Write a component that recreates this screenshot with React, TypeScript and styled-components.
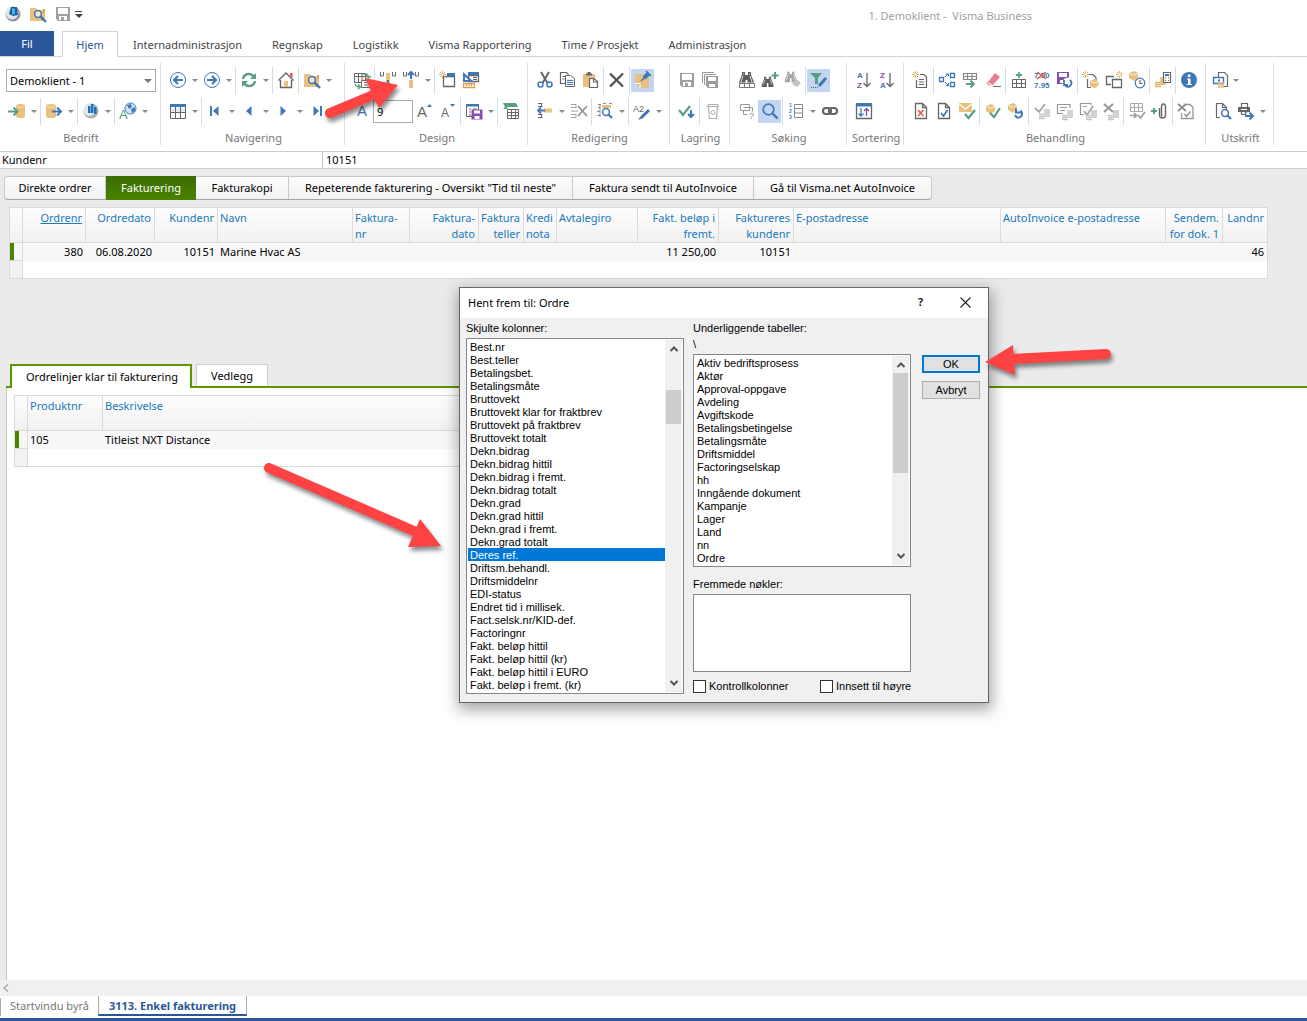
import React from "react";
import styled, { createGlobalStyle, css } from "styled-components";

const uiFont = '"Noto Sans", "Open Sans", sans-serif';
const dialogFont = '"Liberation Sans", Arial, sans-serif';

const GlobalStyle = createGlobalStyle`
  *, *::before, *::after { box-sizing: border-box; }
  body { margin: 0; background: #fff; }
  button, input, select { font: inherit; color: inherit; }
`;

/* ---------- drawing helpers ---------- */

const G = "#666666";
const L = "#b0b0b0";
const B = "#3f78b5";
const N = "#5a9f83";
const Y = "#e9c07f";
const P = "#8350ae";
const R = "#de5a43";

type ShapeProps = { d: string; c?: string; w?: number };
const S = ({ d, c = G, w = 1 }: ShapeProps) => <path d={d} fill="none" stroke={c} strokeWidth={w} />;
const F = ({ d, c = G }: ShapeProps) => <path d={d} fill={c} />;
const T = ({ x, y, c = G, s = 8, b = false, children }: { x: number; y: number; c?: string; s?: number; b?: boolean; children: React.ReactNode }) => (
  <text x={x} y={y} fill={c} fontSize={s} fontWeight={b ? 700 : 400} fontFamily="Liberation Sans, Arial, sans-serif">{children}</text>
);

const Magnifier = ({ x = 0, y = 0, c = B }: { x?: number; y?: number; c?: string }) => (
  <g transform={`translate(${x} ${y})`}>
    <circle cx="4" cy="4" r="3.4" fill="#fff" fillOpacity="0.6" stroke={c} strokeWidth="1.5" />
    <S d="M6.5 6.5l3.5 3.5" c={c} w={2.2} />
  </g>
);
const Sun = ({ x = 0, y = 0 }: { x?: number; y?: number }) => (
  <g transform={`translate(${x} ${y})`}>
    <S d="M3.5 0v7M0 3.5h7M1 1l5 5M6 1l-5 5" c="#e3ae5b" />
    <circle cx="3.5" cy="3.5" r="1.2" fill="#fff" />
  </g>
);
const Cube = ({ x = 0, y = 0 }: { x?: number; y?: number }) => (
  <g transform={`translate(${x} ${y})`}>
    <F d="M5 0l4 2v5l-4 3-5-3V2z" c={Y} />
    <S d="M0.5 2.3l4 2 4.5-2" c="#fff4dd" />
  </g>
);
const Coins = ({ x = 0, y = 0, c = "#c4c4c4" }: { x?: number; y?: number; c?: string }) => (
  <g transform={`translate(${x} ${y})`}>
    <S d="M5 1h6M5 3h6M5 5h6M5 7h6M0 5.5h5M0 7.5h5M0 9.5h6" c={c} w={1.3} />
  </g>
);
const Binoculars = ({ c = "#5c5c5c" }: { c?: string }) => (
  <>
    <F d="M4 1h3v3h3V1h3v3l3 7v3H9.500V9h-2v5H1v-3l3-7z" c={c} />
    <S d="M5 5l-2 6M12 5l2 6M5 3h1M11 3h1" c="#fff" w={0.8} />
  </>
);
const Doc = ({ c = G }: { c?: string }) => <S d="M3.500 1.500h7l4 4v11h-11zM10.500 1.500v4h4" c={c} w={1.300} />;
const Disk = ({ c }: { c: string }) => (
  <>
    <F d="M2 2h14v14H4l-2-2z" c={c} />
    <F d="M4 3h10v6H4zM5 11h8v4H5z" c="#fff" />
    <F d="M7 12h3v3H7z" c={c} />
  </>
);

const icons: Record<string, React.ReactNode> = {
  orb: (
    <>
      <circle cx="9" cy="9" r="7.500" fill="#8d969d" />
      <circle cx="8" cy="8" r="6.500" fill="#dfe5ea" />
      <F d="M7 2l6 0 1 8-5 1-4-2z" c="#1b5f96" />
      <F d="M8 3l3 1v5l-3 1z" c="#49b1e6" />
    </>
  ),
  folderSearch: (
    <>
      <F d="M1 3h6l1.500 2H16v11H1z" c={Y} />
      <F d="M14 4h2v4h-2z" c="#d9a653" />
      <Magnifier x={5} y={5} />
      <S d="M12 12l5 5" c={B} w={2.400} />
    </>
  ),
  save: <Disk c="#a0a0a0" />,
  dbIn: (
    <>
      <F d="M8 4q0-2 4.500-2T17 4v10q0 2-4.500 2T8 14z" c={Y} />
      <S d="M9 4.500q3.500 2 7 0" c="#f6dfb8" />
      <S d="M0 9.500h9M5.500 5.500l4 4-4 4" c={N} w={2} />
    </>
  ),
  dbOut: (
    <>
      <F d="M1 4q0-2 5-2t5 2v10q0 2-5 2t-5-2z" c={Y} />
      <S d="M2 4.500q4 2 8 0" c="#f6dfb8" />
      <S d="M7 9.500h9M12 5.500l4 4-4 4" c={B} w={2} />
    </>
  ),
  orbBars: (
    <>
      <circle cx="9" cy="9" r="7.500" fill="#a9b0b6" />
      <circle cx="7.500" cy="8" r="6" fill="#e3e8ec" />
      <F d="M6 4h2.500v7H6zM9 2h2.500v9H9zM12 5h2.500v7H12z" c="#1c74b4" />
    </>
  ),
  language: (
    <>
      <circle cx="11.500" cy="6.500" r="5.500" fill="#d7e5f2" stroke={B} />
      <F d="M8 3l4-1 1 3-3 2zM12 7l4-2v4l-3 2z" c={B} />
      <T x={0} y={17} c={N} s={13}>A</T>
    </>
  ),
  back: (
    <>
      <circle cx="9" cy="9" r="7.500" fill="#fff" stroke={B} />
      <S d="M14 9H5M9 5L5 9l4 4" c={B} w={2.200} />
    </>
  ),
  forward: (
    <>
      <circle cx="9" cy="9" r="7.500" fill="#fff" stroke={B} />
      <S d="M4 9h9M9 5l4 4-4 4" c={B} w={2.200} />
    </>
  ),
  refresh: (
    <>
      <S d="M3 8q1-5 6-5 3 0 5 3M15 10q-1 5-6 5-3 0-5-3" c={N} w={2.400} />
      <F d="M16 2v6h-6zM2 16v-6h6z" c={N} />
    </>
  ),
  home: (
    <>
      <F d="M13 2h2.500v5L13 5z" c={R} />
      <S d="M1.500 9.500L9 2l7.500 7.500M3.500 9v7.500h11V9" w={1.400} />
      <F d="M7 10h4v6H7z" c={Y} />
    </>
  ),
  table: (
    <>
      <F d="M1 2h16v3H1z" c={B} />
      <F d="M2 6h14v5H2z" c="#e0ebf6" />
      <S d="M1.500 5v11.500h15V5M1 10.500h16M6.500 5v11M11.500 5v11" w={1} />
    </>
  ),
  first: <><S d="M5 4v10" c={B} w={2} /><F d="M12.500 4v10L7 9z" c={B} /></>,
  prev: <F d="M11.500 4v10L6 9z" c={B} />,
  next: <F d="M6.500 4v10L12 9z" c={B} />,
  last: <><S d="M13 4v10" c={B} w={2} /><F d="M5.500 4v10L11 9z" c={B} /></>,
  tableSwap: (
    <>
      <S d="M1.500 2.500h11v9h-11zM1 5.500h11M5.500 2v9M9 2v9" />
      <F d="M8 9h9v8H8z" c="#fff" />
      <S d="M8.500 9.500h8v7h-8zM11 11.500h4M11 14h4" />
      <S d="M10 3h3q2 0 2.500 3M13 4.500l2.500 2.500L18 5M2 13q1 3 5 3M5 13.500l2.500 2.500L5 18" c={N} w={1.400} />
    </>
  ),
  colRemove: (
    <>
      <S d="M1.500 1v4h3V1M13.500 1v4h3V1" />
      <F d="M7 2h4v14H7z" c={Y} />
      <S d="M9 9v7" c={B} w={2} />
    </>
  ),
  colInsert: (
    <>
      <S d="M1.500 1v4h3V1M13.500 1v4h3V1" />
      <F d="M7 9h4v8H7z" c={Y} />
      <S d="M9 8V1M6 4l3-3 3 3" c={B} w={2} />
    </>
  ),
  newWindow: (
    <>
      <S d="M4.500 5.500h11v10h-11z" w={1.300} />
      <F d="M8 2h8v3.500H8z" c={B} />
      <Sun x={0} y={0} />
    </>
  ),
  rulerWindow: (
    <>
      <S d="M6.500 4.500h10v6h-10z" w={1.300} />
      <F d="M6 1h11v3H6z" c={B} />
      <F d="M1 1l11 10H1z" c={B} />
      <F d="M3 5.500L6.500 9H3z" c="#fff" />
      <S d="M11 6.500h4M11 8.500h4" />
      <S d="M1.500 12.500h11v4h-11zM4.500 13v2M7 13v2M9.500 13v2" c="#e29a4c" w={1.300} />
    </>
  ),
  fontA: <T x={4} y={14} c={B} s={15}>A</T>,
  fontUp: <><T x={1} y={15} s={15}>A</T><F d="M11 5h5l-2.500-3z" c={B} /></>,
  fontDown: <><T x={2} y={15} s={12}>A</T><F d="M11 2h5l-2.500 3z" c={B} /></>,
  layoutSave: (
    <>
      <S d="M1.500 3.500h12v11h-12zM4 7h2M4 10h2M4 13h2M8 7h4" />
      <F d="M1 2h13v2.500H1z" c={B} />
      <F d="M6.500 7.500h11v10h-11z" c={P} />
      <F d="M9 8.500h6v3H9zM9.500 14h5v3h-5z" c="#fff" />
    </>
  ),
  tableGreen: (
    <>
      <F d="M1 1h13l2 4H3z" c={N} />
      <F d="M1 7l3-3 2 3z" c={N} />
      <S d="M5.500 7.500h11v9h-11zM5 10.500h11M5 13.500h11M9.500 8v8M13.500 8v8" />
    </>
  ),
  rowInsert: (
    <>
      <S d="M2 1.500h4.500M5.500 1v4M2 4.500h4.500M2 12.500h4.500M5.500 12v4M2 15.500h4.500" />
      <F d="M8 6.500h8v4H8z" c={Y} />
      <S d="M9 8.500H2M5 5.500l-3 3 3 3" c={B} w={1.800} />
    </>
  ),
  rowDelete: (
    <>
      <S d="M1 2.500h5V6M1 15.500h5V12M1 5.500h5M1 12.500h5M1 9h7" c="#a0a0a0" />
      <S d="M8 4l9 10M17 4L8 14" c="#969696" w={1.800} />
    </>
  ),
  searchReplace: (
    <>
      <S d="M2 2.500h3M2 5.500h2M1 9.500h3M1 13.500h3M7 1.500h3M13 1.500h3M4 2v13" c="#8a8a8a" />
      <F d="M6 3h9v3H6z" c={Y} />
      <Magnifier x={6} y={6} />
    </>
  ),
  rename: (
    <>
      <T x={0} y={10} s={9}>A2</T>
      <S d="M8 16l8-8" c={B} w={3} />
      <S d="M6 17l2-1" c={G} w={1.500} />
    </>
  ),
  cut: (
    <>
      <S d="M5 1l6.500 11M13 1L6.500 12" w={2} />
      <circle cx="4.500" cy="13.500" r="2.500" fill="none" stroke={B} strokeWidth="1.500" />
      <circle cx="13.500" cy="13.500" r="2.500" fill="none" stroke={B} strokeWidth="1.500" />
    </>
  ),
  copy: (
    <>
      <S d="M6 12.500H1.500v-11h6l2 2M3.500 5.500h3M3.500 8h2" w={1.200} />
      <F d="M6 4h6l3 3v9H6z" c="#fff" />
      <S d="M8 9.500h6M8 11.500h6M8 13.500h6" c={B} />
      <S d="M6.500 4.500h5l4 3v8h-9z" />
    </>
  ),
  paste: (
    <>
      <F d="M1 3h12v13H1z" c={Y} />
      <S d="M4 3.500h6M5.500 2h3" w={2} />
      <F d="M7 7h5l4 3v7H7z" c="#fff" />
      <S d="M7.500 7.500h4.500l3.500 3v6h-8zM11.500 8v3h4" w={1.200} />
    </>
  ),
  remove: <S d="M2 2.500l13 13M15 2.500l-13 13" c="#555" w={2.400} />,
  note: (
    <>
      <F d="M1 3h14v14H6l-5-4z" c={Y} />
      <S d="M1 12.500h5V17" c="#fff" />
      <S d="M10 7l5-5" c={B} w={4} />
      <S d="M7 10l4-4M12 0l5 5" c={B} w={1.500} />
    </>
  ),
  saveAll: (
    <>
      <S d="M1.500 12V1.500H13M3.500 14V3.500H15" c="#9a9a9a" />
      <F d="M5 5h12v12H7l-2-2z" c="#9a9a9a" />
      <F d="M7 6h8v4H7zM8 13h6v3H8z" c="#fff" />
    </>
  ),
  checkDown: (
    <>
      <S d="M1 8l4 5 7-9" c={N} w={2.200} />
      <S d="M13 8v7M10 12l3 3 3-3" c={B} w={2} />
    </>
  ),
  bin: (
    <>
      <S d="M4.500 2.500h9l1 2h-11zM4.500 5l1 11.500h7l1-11.500" c={L} w={1.200} />
      <circle cx="9" cy="10.500" r="2" fill="none" stroke={L} />
    </>
  ),
  findTable: (
    <>
      <Binoculars />
      <F d="M1 11.500h16V17H1z" c="#fff" />
      <S d="M1.500 12.500h15v4h-15zM6.500 12v4M11.500 12v4" c="#777" />
    </>
  ),
  findAdd: (
    <>
      <g transform="translate(0 5) scale(.78)"><Binoculars /></g>
      <S d="M14 1v7M10.500 4.500h7" c={N} w={2} />
    </>
  ),
  findErase: (
    <>
      <g transform="scale(.8)"><Binoculars c="#a5a5a5" /></g>
      <F d="M12 8l5 4-4 4-5-3z" c="#c2c2c2" />
    </>
  ),
  filterEdit: (
    <>
      <F d="M0 2h12L8 7v6H5V7z" c={N} />
      <S d="M9 15l7-8" c={B} w={3} />
      <path d="M1 16.500h8" stroke={G} strokeDasharray="1 1" />
    </>
  ),
  windowsHelp: (
    <>
      <S d="M2.500 2.500h9v6h-9zM5.500 8.500v4h4M5.500 5.500h9v4M5.500 12.500h3" c="#999" />
      <T x={11} y={17} c="#888" s={9}>?</T>
    </>
  ),
  search: (
    <>
      <circle cx="7.500" cy="7.500" r="5.300" fill="none" stroke={B} strokeWidth="1.700" />
      <S d="M11.500 11.500l5 5" c={B} w={2.400} />
    </>
  ),
  numbered: (
    <>
      <T x={2} y={5} c={B} s={5} b>1</T>
      <T x={2} y={11} c={B} s={5} b>2</T>
      <T x={2} y={17} c={B} s={5} b>3</T>
      <S d="M7.500 2.500h8v13h-8zM7 6.500h8M7 11h8" c="#8a8a8a" />
    </>
  ),
  link: (
    <>
      <rect x="2" y="6" width="8" height="6" rx="3" fill="none" stroke="#666" strokeWidth="2.200" />
      <rect x="8" y="6" width="8" height="6" rx="3" fill="none" stroke="#666" strokeWidth="2.200" />
    </>
  ),
  sortAZ: (
    <>
      <T x={2} y={7} c={B} s={8} b>A</T>
      <T x={2} y={17} c={P} s={8} b>Z</T>
      <S d="M12 2v13M8.500 12l3.500 3.500 3.500-3.500" w={1.300} />
    </>
  ),
  sortZA: (
    <>
      <T x={2} y={7} c={P} s={8} b>Z</T>
      <T x={2} y={17} c={B} s={8} b>A</T>
      <S d="M12 2v13M8.500 12l3.500 3.500 3.500-3.500" w={1.300} />
    </>
  ),
  sortWindow: (
    <>
      <S d="M1.500 2v14.500h15V2" w={1.300} />
      <F d="M1 1h16v3.500H1z" c={B} />
      <S d="M6 6v8M3.500 11.500L6 14l2.500-2.500" c={B} w={1.300} />
      <S d="M11.500 14V6.500M9 9l2.500-2.500L14 9" c={P} w={1.300} />
    </>
  ),
  newDoc: (
    <>
      <S d="M8 3.500h4l2.500 2.500v10.500h-10V9M7 8.500h5M7 11h5M7 13.500h5" w={1.200} />
      <Sun />
    </>
  ),
  flow: (
    <>
      <S d="M1.500 6.500h4v4h-4zM12.500 2.500h4v4h-4zM12.500 11.500h4v4h-4z" c={B} w={1.300} />
      <S d="M7 6l3-3M8 3h2.500v2.500M7 11l3 3M8 14.500h2.500V12" c={B} w={1} />
    </>
  ),
  tableNext: (
    <>
      <S d="M2.500 2.500h13v6h-13zM2 5.500h13M6.500 2v6M11 2v6" c="#888" w={1.200} />
      <S d="M5 13h8M9.500 9.500L13 13l-3.500 3.500" c={N} w={1.800} />
    </>
  ),
  eraser: (
    <>
      <F d="M11 2l5 4-7 8-5-3z" c="#e77d90" />
      <F d="M3 10l5 5H5l-3-2z" c="#f3b7c0" />
      <S d="M9 15.500h8" />
    </>
  ),
  tableAdd: (
    <>
      <S d="M9 1v6M6 4h6" c={N} w={1.800} />
      <S d="M2.500 8.500h13v8h-13zM2 12.500h13M6.500 9v7M11.500 9v7" />
    </>
  ),
  price: (
    <>
      <T x={1} y={7} c={B} s={8} b>7.50</T>
      <T x={1} y={17} c={B} s={8} b>7.95</T>
      <S d="M4 1l9 7M13 1L4 8" c={R} w={1.400} />
    </>
  ),
  saveBack: (
    <>
      <F d="M1 1h12v12H1z" c={P} />
      <F d="M3 2h8v4H3zM4 9h5v3H4z" c="#fff" />
      <circle cx="12" cy="12" r="5.500" fill="#fff" />
      <S d="M9 14q2 3 5 1 3-3 0-6M8 9v5h4" c={B} w={1.800} />
    </>
  ),
  cubeDoc: (
    <>
      <S d="M5.500 8v8.500H9M7 3.500h4l3 3V9" w={1.200} />
      <Sun />
      <g transform="translate(8 8) scale(.95)"><Cube /></g>
    </>
  ),
  windowsSun: (
    <>
      <S d="M9 5.500H1.500v8H6M7.500 8.500h9v8h-9z" w={1.300} />
      <Sun x={11} y={0} />
    </>
  ),
  cubeClock: (
    <>
      <Cube x={1} y={0} />
      <circle cx="12" cy="12" r="4.800" fill="#fff" stroke={B} strokeWidth="1.200" />
      <S d="M12 9v3.500h2.500" w={1.200} />
    </>
  ),
  calcCoins: (
    <>
      <Coins x={1} y={6} c="#e3b260" />
      <F d="M9 1h8v11H9z" c="#fff" />
      <S d="M9.500 1.500h7v10h-7z" w={1.200} />
      <S d="M11 4h4" c={B} w={2} />
      <S d="M11 7h1M14 7h1M11 9.500h1M14 9.500h1" />
    </>
  ),
  info: (
    <>
      <circle cx="9" cy="9" r="8" fill={B} />
      <F d="M7.800 3.500h2.600v2.400H7.800zM7 7.500h3.500v5.500H12v1H6.500v-1H8V8.500H7z" c="#fff" />
    </>
  ),
  docX: <><Doc /><S d="M6 8l5.500 6M11.500 8L6 14" c={R} w={1.600} /></>,
  docCheck: <><Doc /><S d="M6 11l2.500 3 4-6" c={B} w={1.800} /></>,
  mailCheck: (
    <>
      <F d="M1 1h13v9H1z" c={Y} />
      <S d="M1 2l6.500 5L14 2" c="#fff" w={1.200} />
      <S d="M7 12l3.500 4L17 8" c={N} w={2.200} />
    </>
  ),
  cubeCheck: <><Cube x={2} y={2} /><S d="M6 11l4 4 6-9" c={N} w={2.200} /></>,
  cubeBack: (
    <>
      <Cube x={1} y={1} />
      <circle cx="12" cy="11" r="5" fill="#fff" />
      <S d="M8 13q2 4 5.500 2 3-3 0-6.500M9 6.500v4h4.500" c={B} w={2} />
    </>
  ),
  coinsCheck: <><S d="M2 6l4 4 6-8" c="#a5a5a5" w={1.800} /><Coins x={6} y={7} /></>,
  coinsDoc: <><S d="M14 6V2.500H1.500v9H7M4 5.500h7M4 8.500h5" c="#9a9a9a" w={1.200} /><Coins x={6} y={8} /></>,
  coinsDocCheck: <><S d="M12 3V1.500H1.500v11H5M4 4.500h4" c="#9a9a9a" w={1.200} /><S d="M5 9l3 4 6-9" c="#a5a5a5" w={1.800} /><Coins x={7} y={8} /></>,
  coinsX: <><S d="M2 2l9 8M11 2L2 10" c="#999" w={2} /><Coins x={6} y={8} /></>,
  tableCheck: (
    <>
      <S d="M2.500 1.500h12v8h-12zM2 5.500h12M6.500 1v8M10.500 1v8" c="#aaa" />
      <S d="M2 13.500h6M6 11l2.500 2.500L6 16M10 13l2.500 3L17 10" c="#999" w={1.600} />
    </>
  ),
  attach: (
    <>
      <S d="M0 9h6M3 6v6" c={N} w={2} />
      <S d="M8.500 6v7q0 3 3 3t3-3V5q0-3-2-3t-2 3v8q0 1 1 1" w={1.400} />
    </>
  ),
  docXCheck: (
    <>
      <S d="M8 2.500h5l3 3v11H4.500V11" c="#999" w={1.300} />
      <S d="M1 2l8 7M9 2L1 9" c="#8f8f8f" w={1.800} />
      <S d="M7.500 12l2 2.500 4-5" c="#8f8f8f" w={1.400} />
    </>
  ),
  printMoney: (
    <>
      <S d="M6.500 6V1.500h6l3 3v11H11" w={1.200} />
      <S d="M1.500 6.500h10v6h-10z" c={B} w={1.400} />
      <S d="M6 9.500h2" c={B} w={2} />
      <S d="M6 12h6M6 14h6M6 16h6" c={Y} w={1.400} />
    </>
  ),
  docSearch: (
    <>
      <S d="M6 15.500H2.500v-14h6l4 4V7M8.500 1.500v4h4" w={1.200} />
      <Magnifier x={7} y={7} />
    </>
  ),
  printNext: (
    <>
      <S d="M4.500 5V1.500h6V5M4.500 10v2.500h4V10h2" w={1.200} />
      <F d="M1 5h12v5H1z" />
      <F d="M4 7h6v1H4z" c="#fff" />
      <S d="M8 14h8M12.500 10.500L16 14l-3.500 3.500" c={B} w={1.800} />
    </>
  ),
};

const IconSvg = styled.svg`
  display: block;
  width: 18px;
  height: 18px;
  flex: none;
  overflow: visible;
`;
const Icon = ({ name }: { name: string }) => (
  <IconSvg viewBox="0 0 18 18" aria-hidden="true">{icons[name]}</IconSvg>
);

/* ---------- window frame ---------- */

const Window = styled.div`
  position: relative;
  display: flex;
  flex-direction: column;
  min-height: 100vh;
  overflow: hidden;
  background: #fff;
  color: #000;
  font: 11px/16px ${uiFont};
`;

const TitleBar = styled.header`
  display: flex;
  align-items: center;
  gap: 2px;
  height: 31px;
  padding: 0 275px 3px 1px;
`;
const WindowTitle = styled.h1`
  margin: 0 0 0 auto;
  padding-top: 3px;
  color: #a0a0a0;
  font-size: 11px;
  font-weight: 400;
  white-space: pre;
`;

const IconButton = styled.button<{ $active?: boolean; $narrow?: boolean }>`
  display: flex;
  align-items: center;
  justify-content: center;
  flex: none;
  width: ${(p) => (p.$narrow ? 19 : 23)}px;
  height: 23px;
  padding: 0 0 1px;
  border: 0;
  background: ${(p) => (p.$active ? "#c2d5f2" : "transparent")};
`;
const DropButton = styled.button`
  flex: none;
  display: flex;
  align-items: center;
  justify-content: center;
  width: 11px;
  height: 23px;
  padding: 0 0 1px 1px;
  border: 0;
  background: transparent;
  &::after {
    content: "";
    border: 3px solid transparent;
    border-top-color: #888;
    border-bottom: 0;
  }
`;
const CustomizeButton = styled(DropButton)`
  flex-direction: column;
  gap: 2px;
  padding: 0;
  margin-left: -3px;
  &::before {
    content: "";
    width: 7px;
    height: 1px;
    background: #444;
  }
  &::after { border-width: 4px 4px 0; border-top-color: #444; }
`;

const MenuTabs = styled.nav`
  display: flex;
  height: 26px;
  border-bottom: 1px solid #d4d4d4;
`;
const FileTab = styled.button`
  width: 54px;
  margin-right: 8px;
  padding: 0;
  border: 0;
  background: #2b579a;
  color: #fff;
`;
const MenuTab = styled.button<{ $active?: boolean }>`
  padding: 2px 15px 0 15px;
  border: 0;
  background: transparent;
  color: #444;
  white-space: nowrap;
  ${(p) => p.$active && css`
    width: 56px;
    height: 26px;
    padding: 1px 0 0;
    margin-bottom: -1px;
    border: 1px solid #d4d4d4;
    border-bottom: 0;
    background: #fff;
    color: #2b579a;
  `}
`;

/* ---------- ribbon ---------- */

const Ribbon = styled.div`
  display: flex;
  height: 94px;
  padding: 6px 0;
`;
const Group = styled.section<{ $width: number }>`
  display: flex;
  flex-direction: column;
  gap: 8px;
  flex: none;
  width: ${(p) => p.$width}px;
  padding: 6px 0 0 5px;
  border-right: 1px solid #dcdcdc;
`;
const ToolRow = styled.div`
  display: flex;
  align-items: center;
  height: 23px;
`;
const Divider = styled.span`
  flex: none;
  width: 1px;
  height: 27px;
  margin: 0 1px;
  background: #cfdff0;
`;
const GroupLabel = styled.h2`
  margin: 0;
  padding-right: 3px;
  color: #777;
  font-size: 11px;
  font-weight: 400;
  line-height: 14px;
  text-align: center;
`;
const ComboWrap = styled.label`
  position: relative;
  display: flex;
  &::after {
    content: "";
    position: absolute;
    right: 4px;
    top: 10px;
    border: 4px solid transparent;
    border-top-color: #777;
    border-bottom: 0;
    pointer-events: none;
  }
`;
const Combo = styled.select`
  appearance: none;
  width: 150px;
  height: 23px;
  margin-left: 1px;
  padding: 0 3px;
  border: 1px solid #ababab;
  border-radius: 0;
  background: #fff;
`;
const SizeInput = styled.input`
  width: 40px;
  height: 23px;
  padding: 0 3px;
  border: 1px solid #ababab;
`;

const renderTool = (tool: string, i: number) => {
  if (tool === "|") return <Divider key={i} />;
  if (tool === "v") return <DropButton key={i} aria-label="Flere valg" />;
  if (tool === "bedrift")
    return (
      <ComboWrap key={i}>
        <Combo aria-label="Bedrift" defaultValue="1"><option value="1">Demoklient - 1</option></Combo>
      </ComboWrap>
    );
  if (tool === "size") return <SizeInput key={i} aria-label="Skriftstørrelse" defaultValue="9" />;
  const active = tool.startsWith("*");
  const narrow = tool.startsWith("<");
  const name = active || narrow ? tool.slice(1) : tool;
  return (
    <IconButton key={i} $active={active} $narrow={narrow} aria-label={name}><Icon name={name} /></IconButton>
  );
};

const groups: { label: string; width: number; rows: string[] }[] = [
  { label: "Bedrift", width: 161, rows: ["bedrift", "dbIn v | dbOut v | orbBars v | language v"] },
  { label: "Navigering", width: 184, rows: ["back v forward v | refresh v | home | folderSearch v", "table v | first v prev v next v last"] },
  { label: "Design", width: 183, rows: ["tableSwap | colRemove colInsert v | newWindow rulerWindow", "fontA size fontUp fontDown | layoutSave v | tableGreen"] },
  { label: "Redigering", width: 142, rows: ["cut copy paste | remove | *note", "rowInsert v rowDelete | searchReplace v | rename v"] },
  { label: "Lagring", width: 60, rows: ["save saveAll", "checkDown | bin"] },
  { label: "Søking", width: 117, rows: ["findTable findAdd findErase | *filterEdit", "windowsHelp *search | numbered v link"] },
  { label: "Sortering", width: 57, rows: ["sortAZ sortZA", "sortWindow"] },
  { label: "Behandling", width: 302, rows: [
    "newDoc | flow tableNext eraser | tableAdd price saveBack | cubeDoc windowsSun cubeClock | calcCoins | info",
    "docX docCheck mailCheck | cubeCheck cubeBack | coinsCheck coinsDoc coinsDocCheck coinsX | tableCheck attach | docXCheck",
  ] },
  { label: "Utskrift", width: 68, rows: ["<printMoney v", "docSearch printNext v"] },
];

/* ---------- work area ---------- */

const FieldBar = styled.div`
  display: flex;
  height: 18px;
  border: solid #cdcdcd;
  border-width: 1px 0;
  line-height: 16px;
`;
const FieldName = styled.div`
  width: 323px;
  padding-left: 2px;
  border-right: 1px solid #c6c6c6;
`;
const FieldValue = styled.div`
  flex: 1;
  padding-left: 3px;
`;

const Workspace = styled.main`
  display: flex;
  flex-direction: column;
  flex: 1;
  background: #ebebeb;
`;
const Segments = styled.div`
  display: flex;
  align-self: flex-start;
  height: 24px;
  margin: 7px 0 0 4px;
  border: 1px solid #c9c9c9;
  border-bottom-color: #a5a5a5;
  border-radius: 4px;
  background: linear-gradient(#fdfdfd, #f1f1f1);
`;
const Segment = styled.button<{ $width: number; $active?: boolean }>`
  width: ${(p) => p.$width}px;
  padding: 0;
  border: 0;
  border-right: 1px solid #c9c9c9;
  background: transparent;
  white-space: nowrap;
  &:last-child { border-right: 0; }
  ${(p) => p.$active && css`
    margin: -1px 0;
    border-right: 0;
    background: linear-gradient(#3b6c00, #4a8200);
    color: #fff;
  `}
`;
const segments: [string, number][] = [
  ["Direkte ordrer", 101],
  ["Fakturering", 90],
  ["Fakturakopi", 93],
  ['Repeterende fakturering - Oversikt "Tid til neste"', 284],
  ["Faktura sendt til AutoInvoice", 181],
  ["Gå til Visma.net AutoInvoice", 177],
];

const DataTable = styled.table`
  table-layout: fixed;
  border-collapse: separate;
  border-spacing: 0;
  border: solid #dadada;
  border-width: 1px 0 1px 1px;
  background: #fff;
`;
const TopTable = styled(DataTable)`
  width: 1259px;
  margin: 7px 0 0 9px;
`;
const LineTable = styled(DataTable)`
  width: 900px;
  margin: 7px 0 0 7px;
`;
const HeadCell = styled.th<{ $right?: boolean; $sorted?: boolean }>`
  height: 35px;
  padding: 2px 3px 0 2px;
  border-right: 1px solid #dadada;
  border-bottom: 1px solid #dadada;
  background: linear-gradient(#fdfdfd, #f1f1f1);
  color: #2079bd;
  font-weight: 400;
  line-height: 16px;
  text-align: ${(p) => (p.$right ? "right" : "left")};
  text-decoration: ${(p) => (p.$sorted ? "underline" : "none")};
  vertical-align: top;
  white-space: pre;
  overflow: hidden;
`;
const Cell = styled.td<{ $right?: boolean; $blank?: boolean }>`
  height: ${(p) => (p.$blank ? 17 : 18)}px;
  padding: 0 3px 0 2px;
  background: ${(p) => (p.$blank ? "#fff" : "#f7f7f7")};
  line-height: 16px;
  text-align: ${(p) => (p.$right ? "right" : "left")};
  white-space: nowrap;
  &:last-child { border-right: 1px solid #dadada; }
`;
const RowHandle = styled.td<{ $current?: boolean }>`
  padding: 0;
  border-right: 1px solid #dadada;
  border-bottom: ${(p) => (p.$current ? "1px solid #dadada" : "0")};
  background: ${(p) => (p.$current ? "linear-gradient(90deg, #4a8600 4px, #f7f7f7 4px)" : "#f2f2f2")};
`;

type Column = { head: string; width?: number; right?: boolean; sorted?: boolean; value?: string };
const orderColumns: Column[] = [
  { head: "Ordrenr", width: 63, right: true, sorted: true, value: "380" },
  { head: "Ordredato", width: 69, right: true, value: "06.08.2020" },
  { head: "Kundenr", width: 63, right: true, value: "10151" },
  { head: "Navn", width: 135, value: "Marine Hvac AS" },
  { head: "Faktura-\nnr", width: 57 },
  { head: "Faktura-\ndato", width: 69, right: true },
  { head: "Faktura\nteller", width: 45, right: true },
  { head: "Kredi\nnota", width: 33 },
  { head: "Avtalegiro", width: 81 },
  { head: "Fakt. beløp i\nfremt.", width: 81, right: true, value: "11 250,00" },
  { head: "Faktureres\nkundenr", width: 75, right: true, value: "10151" },
  { head: "E-postadresse", width: 207 },
  { head: "AutoInvoice e-postadresse", width: 165 },
  { head: "Sendem.\nfor dok. 1", width: 57, right: true },
  { head: "Landnr", width: 45, right: true, value: "46" },
];
const lineColumns: Column[] = [
  { head: "Produktnr", width: 75, value: "105" },
  { head: "Beskrivelse", value: "Titleist NXT Distance" },
];

const TableContent = ({ columns }: { columns: Column[] }) => (
  <>
    <colgroup>
      <col width={13} />
      {columns.map((c) => <col key={c.head} width={c.width} />)}
    </colgroup>
    <thead>
      <tr>
        <HeadCell as="td" />
        {columns.map((c) => <HeadCell key={c.head} $right={c.right} $sorted={c.sorted}>{c.head}</HeadCell>)}
      </tr>
    </thead>
    <tbody>
      <tr>
        <RowHandle $current />
        {columns.map((c) => <Cell key={c.head} $right={c.right}>{c.value}</Cell>)}
      </tr>
      <tr>
        <RowHandle />
        {columns.map((c) => <Cell key={c.head} $blank />)}
      </tr>
    </tbody>
  </>
);

const PanelTabs = styled.div`
  display: flex;
  align-items: flex-start;
  gap: 4px;
  height: 24px;
  margin: 85px 0 0 6px;
  padding-left: 4px;
  border-bottom: 2px solid #5a9800;
`;
const PanelTab = styled.button<{ $active?: boolean }>`
  height: 22px;
  padding: 1px 14px 0 14px;
  border: 1px solid #d0d0d0;
  border-bottom: 0;
  background: #fff;
  white-space: nowrap;
  ${(p) => p.$active && css`
    height: 24px;
    padding: 1px 12px 2px 14px;
    border: 2px solid #5a9800;
    border-bottom: 0;
  `}
`;
const Panel = styled.div`
  flex: 1;
  margin-left: 6px;
  border-left: 1px solid #c6c6c6;
  background: #fff;
`;
const HorizontalScroll = styled.div`
  display: flex;
  align-items: center;
  height: 16px;
  padding-left: 3px;
  background: #f0f0f0;
`;
const WindowTabs = styled.footer`
  display: flex;
  height: 25px;
  padding-bottom: 2px;
  border-bottom: 3px solid #2b579a;
  background: #fff;
`;
const WindowTab = styled.button<{ $active?: boolean }>`
  width: 98px;
  height: 18px;
  margin-top: 2px;
  padding: 0 0 2px;
  border: 0;
  border-left: 1px solid #ababab;
  background: transparent;
  color: #777;
  white-space: nowrap;
  ${(p) => p.$active && css`
    width: 149px;
    height: 20px;
    margin-top: 0;
    padding: 2px 0 0;
    border-right: 1px solid #ababab;
    border-bottom: 2px solid #2b579a;
    color: #2b579a;
    font-weight: 700;
  `}
`;

/* ---------- dialog ---------- */

const Dialog = styled.div`
  position: absolute;
  left: 459px;
  top: 287px;
  width: 530px;
  border: 1px solid #666;
  background: #f0f0f0;
  box-shadow: 1px 5px 14px 2px rgba(0, 0, 0, 0.35);
  font: 11px/16px ${dialogFont};
`;
const DialogTitle = styled.div`
  display: flex;
  align-items: center;
  height: 30px;
  padding: 0 16px 0 8px;
  background: #fff;
  font: 11px/16px ${uiFont};
`;
const DialogHeading = styled.h2`
  flex: 1;
  margin: 0;
  font-size: 11px;
  font-weight: 400;
`;
const CaptionButton = styled.button`
  display: flex;
  align-items: center;
  justify-content: center;
  width: 13px;
  height: 20px;
  margin-left: 32px;
  padding: 0 0 2px;
  border: 0;
  background: transparent;
  font-weight: 600;
`;
const DialogBody = styled.div`
  display: grid;
  grid-template-columns: 218px 218px 1fr;
  column-gap: 9px;
  padding: 2px 8px 8px 6px;
`;
const Column = styled.div`
  display: flex;
  flex-direction: column;
`;
const Caption = styled.div<{ $spaced?: boolean }>`
  height: 16px;
  margin-top: ${(p) => (p.$spaced ? 9 : 0)}px;
  white-space: nowrap;
`;
const ListFrame = styled.div<{ $height: number }>`
  display: flex;
  height: ${(p) => p.$height}px;
  margin-top: 2px;
  padding: 1px;
  border: 1px solid #82868f;
  background: #fff;
`;
const List = styled.ul`
  flex: 1;
  margin: 0;
  padding: 0;
  list-style: none;
  overflow: hidden;
`;
const ListItem = styled.li<{ $selected?: boolean }>`
  height: 13px;
  padding-left: 2px;
  line-height: 14px;
  white-space: nowrap;
  ${(p) => p.$selected && css`background: #0078d7; color: #fff;`}
`;
const ScrollTrack = styled.div`
  display: flex;
  flex-direction: column;
  justify-content: space-between;
  align-items: center;
  width: 17px;
  background: #f0f0f0;
`;
const ScrollThumb = styled.div<{ $before: number; $size: number }>`
  width: 15px;
  height: ${(p) => p.$size}px;
  margin: ${(p) => p.$before}px 0 auto;
  background: #cdcdcd;
`;
const ScrollArrow = styled.svg`
  display: block;
  width: 16px;
  height: 17px;
  flex: none;
`;
const Buttons = styled.div`
  display: flex;
  flex-direction: column;
  align-items: flex-end;
  gap: 8px;
  padding-top: 35px;
`;
const PushButton = styled.button<{ $default?: boolean }>`
  width: 58px;
  height: 18px;
  padding: 0;
  border: ${(p) => (p.$default ? "2px solid #0078d7" : "1px solid #adadad")};
  background: #e1e1e1;
  line-height: 14px;
`;
const Checks = styled.div`
  display: grid;
  grid-template-columns: 127px 1fr;
  margin-top: 6px;
`;
const CheckLabel = styled.label`
  display: flex;
  align-items: center;
  gap: 3px;
  white-space: nowrap;
`;
const Check = styled.input`
  appearance: none;
  width: 13px;
  height: 13px;
  margin: 0;
  border: 1px solid #333;
  background: #fff;
`;

const hiddenColumns = [
  "Best.nr", "Best.teller", "Betalingsbet.", "Betalingsmåte", "Bruttovekt", "Bruttovekt klar for fraktbrev",
  "Bruttovekt på fraktbrev", "Bruttovekt totalt", "Dekn.bidrag", "Dekn.bidrag hittil", "Dekn.bidrag i fremt.",
  "Dekn.bidrag totalt", "Dekn.grad", "Dekn.grad hittil", "Dekn.grad i fremt.", "Dekn.grad totalt", "Deres ref.",
  "Driftsm.behandl.", "Driftsmiddelnr", "EDI-status", "Endret tid i millisek.", "Fact.selsk.nr/KID-def.",
  "Factoringnr", "Fakt. beløp hittil", "Fakt. beløp hittil (kr)", "Fakt. beløp hittil i EURO", "Fakt. beløp i fremt. (kr)",
];
const childTables = [
  "Aktiv bedriftsprosess", "Aktør", "Approval-oppgave", "Avdeling", "Avgiftskode", "Betalingsbetingelse",
  "Betalingsmåte", "Driftsmiddel", "Factoringselskap", "hh", "Inngående dokument", "Kampanje", "Lager", "Land", "nn", "Ordre",
];

const ListBox = ({ label, items, selected, height, before, size }: {
  label: string; items: string[]; selected?: string; height: number; before: number; size: number;
}) => (
  <ListFrame $height={height}>
    <List role="listbox" aria-label={label}>
      {items.map((item) => (
        <ListItem key={item} role="option" aria-selected={item === selected} $selected={item === selected}>{item}</ListItem>
      ))}
    </List>
    <ScrollTrack aria-hidden="true">
      <ScrollArrow viewBox="0 0 16 17"><S d="M4.500 11L8 7.500l3.500 3.500" c="#555" w={2} /></ScrollArrow>
      <ScrollThumb $before={before} $size={size} />
      <ScrollArrow viewBox="0 0 16 17"><S d="M4.500 6L8 9.500 11.500 6" c="#555" w={2} /></ScrollArrow>
    </ScrollTrack>
  </ListFrame>
);

/* ---------- red pointer arrows lying over the window ---------- */

const Pointer = styled.svg<{ $x: number; $y: number }>`
  position: absolute;
  left: ${(p) => p.$x}px;
  top: ${(p) => p.$y}px;
  overflow: visible;
  pointer-events: none;
  filter: drop-shadow(2px 4px 2px rgba(0, 0, 0, 0.45));
`;
const PointerShape = ({ x, y, w, h, shaft, head }: { x: number; y: number; w: number; h: number; shaft: string; head: string }) => (
  <Pointer $x={x} $y={y} width={w} height={h} aria-hidden="true">
    <path d={shaft} stroke="#ff4343" strokeWidth="10" strokeLinecap="round" />
    <path d={head} fill="#ff4343" />
  </Pointer>
);

export default function App() {
  return (
    <Window>
      <GlobalStyle />
      <TitleBar>
        <IconButton aria-label="Visma"><Icon name="orb" /></IconButton>
        <IconButton aria-label="Åpne"><Icon name="folderSearch" /></IconButton>
        <IconButton aria-label="Lagre"><Icon name="save" /></IconButton>
        <CustomizeButton aria-label="Tilpass" />
        <WindowTitle>1. Demoklient -  Visma Business</WindowTitle>
      </TitleBar>
      <MenuTabs>
        <FileTab>Fil</FileTab>
        <MenuTab $active>Hjem</MenuTab>
        {["Internadministrasjon", "Regnskap", "Logistikk", "Visma Rapportering", "Time / Prosjekt", "Administrasjon"].map((t) => (
          <MenuTab key={t}>{t}</MenuTab>
        ))}
      </MenuTabs>
      <Ribbon>
        {groups.map((g) => (
          <Group key={g.label} $width={g.width}>
            {g.rows.map((row) => <ToolRow key={row}>{row.split(" ").map(renderTool)}</ToolRow>)}
            <GroupLabel>{g.label}</GroupLabel>
          </Group>
        ))}
      </Ribbon>
      <FieldBar>
        <FieldName>Kundenr</FieldName>
        <FieldValue>10151</FieldValue>
      </FieldBar>
      <Workspace>
        <Segments>
          {segments.map(([label, width]) => (
            <Segment key={label} $width={width} $active={label === "Fakturering"}>{label}</Segment>
          ))}
        </Segments>
        <TopTable><TableContent columns={orderColumns} /></TopTable>
        <PanelTabs>
          <PanelTab $active>Ordrelinjer klar til fakturering</PanelTab>
          <PanelTab>Vedlegg</PanelTab>
        </PanelTabs>
        <Panel>
          <LineTable><TableContent columns={lineColumns} /></LineTable>
        </Panel>
      </Workspace>
      <HorizontalScroll>
        <svg width="6" height="8" viewBox="0 0 6 8" aria-hidden="true"><S d="M5 0.500L1 4l4 3.500" c="#aaa" w={1.500} /></svg>
      </HorizontalScroll>
      <WindowTabs>
        <WindowTab>Startvindu byrå</WindowTab>
        <WindowTab $active>3113. Enkel fakturering</WindowTab>
      </WindowTabs>

      <Dialog role="dialog" aria-label="Hent frem til: Ordre">
        <DialogTitle>
          <DialogHeading>Hent frem til: Ordre</DialogHeading>
          <CaptionButton>?</CaptionButton>
          <CaptionButton aria-label="Lukk">
            <svg width="11" height="11" viewBox="0 0 11 11"><S d="M0.500 0.500l10 10M10.500 0.500l-10 10" c="#222" w={1.100} /></svg>
          </CaptionButton>
        </DialogTitle>
        <DialogBody>
          <Column>
            <Caption>Skjulte kolonner:</Caption>
            <ListBox label="Skjulte kolonner" items={hiddenColumns} selected="Deres ref." height={356} before={33} size={34} />
          </Column>
          <Column>
            <Caption>Underliggende tabeller:</Caption>
            <Caption>\</Caption>
            <ListBox label="Underliggende tabeller" items={childTables} height={213} before={0} size={100} />
            <Caption $spaced>Fremmede nøkler:</Caption>
            <ListFrame $height={78} />
            <Checks>
              <CheckLabel><Check type="checkbox" />Kontrollkolonner</CheckLabel>
              <CheckLabel><Check type="checkbox" />Innsett til høyre</CheckLabel>
            </Checks>
          </Column>
          <Buttons>
            <PushButton $default>OK</PushButton>
            <PushButton>Avbryt</PushButton>
          </Buttons>
        </DialogBody>
      </Dialog>

      <PointerShape x={325} y={78} w={74} h={40} shaft="M5 35L48 17" head="M73 7L40 0L54 30z" />
      <PointerShape x={264} y={462} w={178} h={86} shaft="M5 6L150 69" head="M177 84L156 57L144 85z" />
      <PointerShape x={984} y={344} w={128} h={32} shaft="M122 10L28 15" head="M1 18L29 1L31 31z" />
    </Window>
  );
}
